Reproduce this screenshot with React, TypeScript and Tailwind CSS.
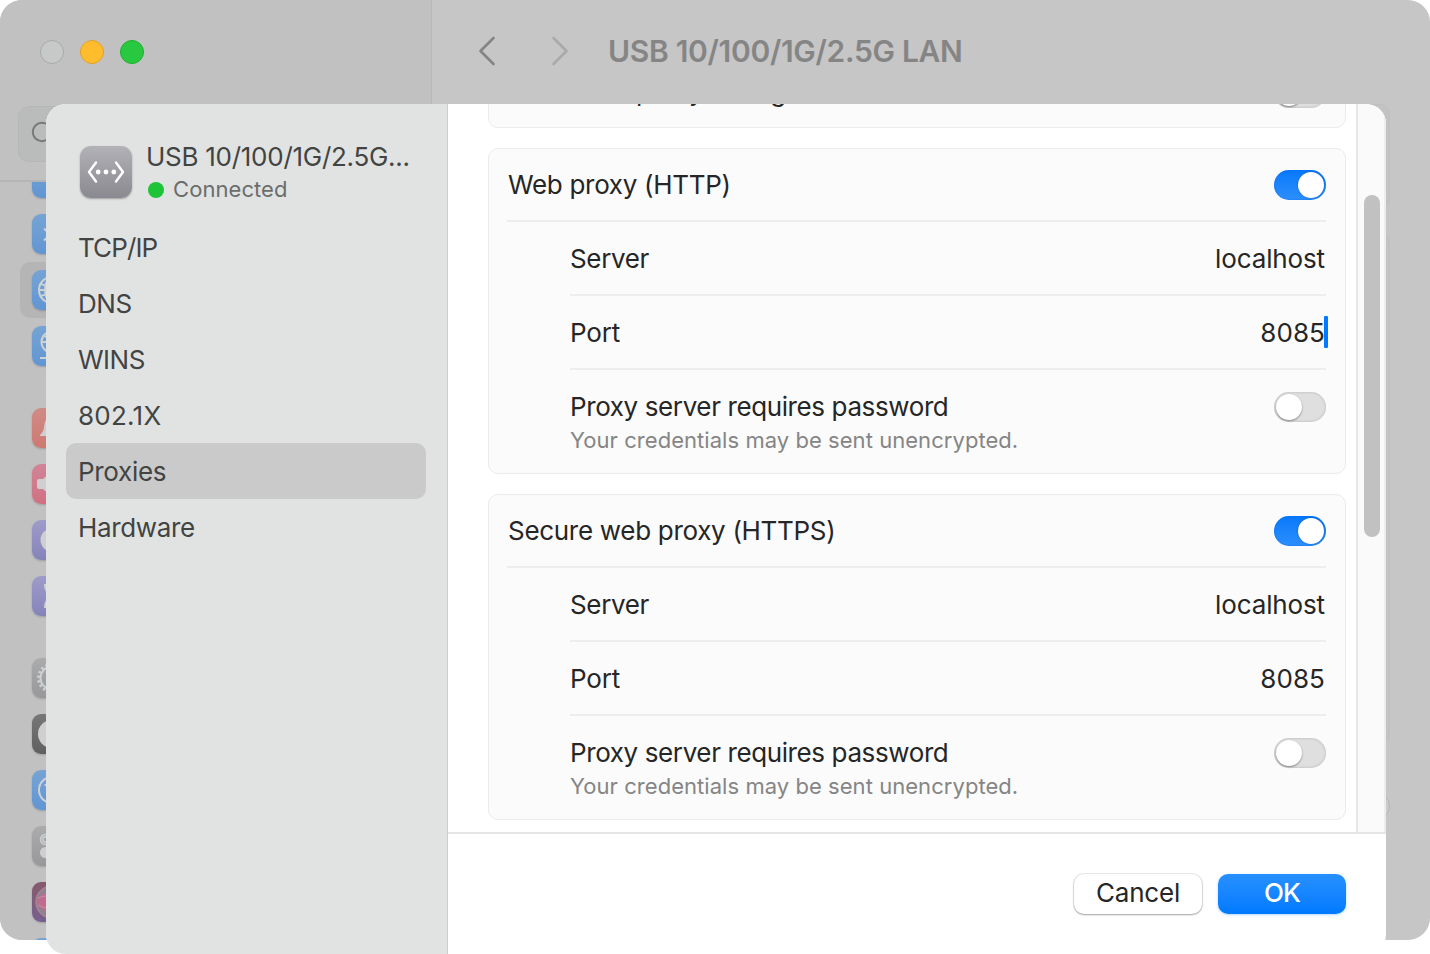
import React from "react";

type TileProps = { tone: string; children?: React.ReactNode };

function Tile({ tone, children }: TileProps) {
  return (
    <div className="flex h-14 shrink-0 items-center pl-8">
      <svg viewBox="0 0 40 40" className={`h-10 w-10 rounded-[9px] shadow-[0_1px_2px_rgba(0,0,0,0.18)] ${tone}`} fill="none" stroke="#cdd1d3" strokeWidth="2">
        {children}
      </svg>
    </div>
  );
}

const BLUE = "bg-linear-to-b from-[#76a3d3] to-[#6196d3]";
const PURPLE = "bg-linear-to-b from-[#9f9bc9] to-[#8683bb]";
const GRAY = "bg-linear-to-b from-[#acacad] to-[#98989a]";

function WindowSidebar() {
  return (
    <div className="flex w-[432px] shrink-0 flex-col border-r border-[#b8bab9] bg-[#c1c1c1]">
      <div className="flex h-[106px] shrink-0 items-center gap-4 pl-10 pb-0.5">
        <div className="h-6 w-6 rounded-full border border-[#a9abaa] bg-[#c6c9c8]" />
        <div className="h-6 w-6 rounded-full border border-[#e2a02b] bg-[#ffbd2e]" />
        <div className="h-6 w-6 rounded-full border border-[#1eae30] bg-[#28c940]" />
      </div>
      <div className="ml-[18px] mr-5 flex h-14 shrink-0 items-center rounded-[11px] border border-[#b5b7b6] bg-[#babcbb] pl-3">
        <svg viewBox="0 0 26 26" className="h-[26px] w-[26px]" fill="none" stroke="#777878" strokeWidth="2">
          <circle cx="11" cy="11" r="9.2" />
          <path d="M18 18l6 6" />
        </svg>
      </div>
      <div className="mt-[18px] flex min-h-0 flex-1 flex-col overflow-hidden border-t-2 border-[#b5b5b5]">
        <div className="-mt-8 flex flex-col">
          <Tile tone={BLUE} />
          <Tile tone={BLUE}>
            <path d="M12 14.500l6 6-6 6" />
          </Tile>
          <div className="relative">
            <div className="absolute inset-y-0 left-5 right-5 rounded-[10px] bg-[#b5b5b5]" />
            <div className="relative">
              <Tile tone={BLUE}>
                <circle cx="20" cy="20" r="13" />
                <ellipse cx="20" cy="20" rx="7" ry="13" />
                <path d="M8 13q5 5 24 0M7 20h26M8 27q5-5 24 0" />
              </Tile>
            </div>
          </div>
          <Tile tone={BLUE}>
            <circle cx="20" cy="16" r="10.500" />
            <ellipse cx="20" cy="16" rx="5" ry="10.500" />
            <path d="M10 16h20M8 32h24M12 10q8 4 16 0" />
          </Tile>
          <div className="mt-[26px] flex flex-col">
            <Tile tone="bg-linear-to-b from-[#d08b86] to-[#ce7971]">
              <path fill="#cfcfcf" stroke="none" d="M8 28c0-2 3-3 4-8 .6-8 3-11 8-11s7.400 3 8 11c1 5 4 6 4 8z" />
            </Tile>
            <Tile tone="bg-linear-to-b from-[#d18498] to-[#d07182]">
              <path fill="#cfcfcf" stroke="none" d="M7 15h4l8-7v24l-8-7H7q-2 0-2-2v-6q0-2 2-2z" />
            </Tile>
            <Tile tone={PURPLE}>
              <circle cx="20" cy="20" r="11.500" fill="#cfcfcf" stroke="none" />
            </Tile>
            <Tile tone={PURPLE}>
              <path fill="#cfcfcf" stroke="none" d="M12 8h16v3q-1 6-6 9 5 3 6 9v3H12v-2q1-7 6-10-5-3-6-10z" />
            </Tile>
          </div>
          <div className="mt-[26px] flex flex-col">
            <Tile tone={GRAY}>
              <circle cx="20" cy="20" r="11.500" />
              <circle cx="20" cy="20" r="13.500" strokeWidth="3" strokeDasharray="2.300 2.400" />
            </Tile>
            <Tile tone="bg-linear-to-b from-[#777777] to-[#606060]">
              <circle cx="20" cy="20" r="14" fill="#cfcfcf" stroke="none" />
            </Tile>
            <Tile tone={BLUE}>
              <circle cx="20" cy="20" r="13" />
              <path d="M12.500 15h5M15 15v10" />
            </Tile>
            <Tile tone={GRAY}>
              <rect x="8.500" y="8.500" width="23" height="10" rx="5" strokeWidth="1.500" />
              <circle cx="13.500" cy="13.500" r="2.700" strokeWidth="1.500" />
              <rect x="8" y="21" width="24" height="11" rx="5.500" fill="#cfcfcf" stroke="none" />
            </Tile>
            <Tile tone="bg-linear-to-b from-[#86596b] to-[#76608f]">
              <circle cx="20" cy="20" r="16" fill="#8d8193" stroke="#a98391" strokeWidth="1.500" />
              <circle cx="15" cy="20" r="9" fill="#c16c8f" stroke="none" />
              <path d="M6 16q8-4 18 0M6 23q8 5 18 0" stroke="#cb8ba4" strokeWidth="1" />
            </Tile>
            <Tile tone={BLUE} />
          </div>
        </div>
      </div>
    </div>
  );
}

function BackWindow() {
  return (
    <div className="flex h-[940px] w-full overflow-hidden rounded-[22px] bg-[#c6c6c6]">
      <WindowSidebar />
      <div className="flex flex-1 flex-col pr-10">
        <div className="flex h-[104px] items-center pb-0.5 pl-[46px]">
          <svg viewBox="0 0 18 30" className="h-[30px] w-[18px]" fill="none" stroke="#858585" strokeWidth="2.600" strokeLinecap="round" strokeLinejoin="round">
            <path d="M15.500 2L2.500 15l13 13" />
          </svg>
          <svg viewBox="0 0 18 30" className="ml-[55px] h-[30px] w-[18px]" fill="none" stroke="#aaaaaa" strokeWidth="2.600" strokeLinecap="round" strokeLinejoin="round">
            <path d="M2.500 2l13 13-13 13" />
          </svg>
          <h1 className="ml-[39px] whitespace-nowrap text-[30px] leading-9 font-semibold tracking-[-0.310px] text-[#858585]">USB 10/100/1G/2.5G LAN</h1>
        </div>
        <div className="ml-5 h-[105px] rounded-[10px] border border-[#bebebe] bg-[#c3c3c3]" />
        <div className="mt-6 ml-5 h-[512px] rounded-[10px] border border-[#bebebe] bg-[#c3c3c3]" />
        <div className="mt-[47px] h-7 w-7 self-end rounded-full border border-[#b5b5b5] bg-[#cbcbcb]" />
      </div>
    </div>
  );
}

function Toggle({ on }: { on: boolean }) {
  return on ? (
    <div className="flex h-[30px] w-[52px] shrink-0 items-center justify-end rounded-full bg-linear-to-b from-[#0578fb] to-[#2b8ffc] pr-[2px] shadow-[inset_0_0_1px_1px_rgba(0,100,230,0.25)]">
      <div className="h-[26px] w-[26px] rounded-full bg-white shadow-[0_0_2px_rgba(0,0,0,0.3)]" />
    </div>
  ) : (
    <div className="flex h-[30px] w-[52px] shrink-0 items-center rounded-full bg-[#dfdfdf] pl-[2px] shadow-[inset_0_0_3px_rgba(0,0,0,0.2)]">
      <div className="h-[26px] w-[26px] rounded-full bg-white shadow-[0_1px_2px_rgba(0,0,0,0.4)]" />
    </div>
  );
}

function ProxyCard({ title, caret }: { title: string; caret?: boolean }) {
  return (
    <section className="h-[326px] shrink-0 rounded-[10px] border border-[#ebebeb] bg-[#fbfbfb] pr-[19px] pl-[18px]">
      <div className="flex h-[73px] items-center justify-between border-b-2 border-[#ededed] pl-px">
        <span className="tracking-[-0.300px]">{title}</span>
        <Toggle on />
      </div>
      <div className="pl-[63px]">
        <div className="flex h-[74px] items-center justify-between border-b-2 border-[#ededed]">
          <span className="tracking-[-0.350px]">Server</span>
          <span className="pr-px tracking-[-0.130px]">localhost</span>
        </div>
        <div className="flex h-[74px] items-center justify-between border-b-2 border-[#ededed]">
          <span className="tracking-[-0.150px]">Port</span>
          <span className="relative pr-px tracking-[0.100px]">
            8085
            {caret && <span className="absolute top-[3px] -right-0.5 h-8 w-1 rounded-[1px] bg-[#007aff]" />}
          </span>
        </div>
        <div className="flex justify-between pt-[21px]">
          <div className="flex flex-col">
            <span className="leading-8 tracking-[-0.390px]">Proxy server requires password</span>
            <span className="pt-[3px] text-[22px] leading-[28px] tracking-[0.050px] text-[#858585]">Your credentials may be sent unencrypted.</span>
          </div>
          <div className="pt-px">
            <Toggle on={false} />
          </div>
        </div>
      </div>
    </section>
  );
}

const NAV = [
  { label: "TCP/IP", tracking: "tracking-[-0.900px]" },
  { label: "DNS", tracking: "tracking-[-0.400px]" },
  { label: "WINS", tracking: "tracking-[-0.500px]" },
  { label: "802.1X", tracking: "tracking-[0.250px]" },
  { label: "Proxies", tracking: "tracking-[-0.300px]", selected: true },
  { label: "Hardware", tracking: "tracking-[-0.350px]" },
];

function SheetSidebar() {
  return (
    <aside className="flex w-[401.500px] shrink-0 flex-col border-r border-[#cdcfce] bg-[#e1e3e2] pr-[21px] pl-5 text-[#424443]">
      <div className="flex h-[115px] pt-[42px] pl-[14px]">
        <div className="flex h-[52px] w-[52px] shrink-0 items-center justify-center rounded-[11px] bg-linear-to-b from-[#b3b2b7] to-[#8a898f] shadow-[0_1px_2px_rgba(0,0,0,0.3)]">
          <svg viewBox="0 0 40 24" className="h-6 w-10" fill="none" stroke="white" strokeWidth="2.400" strokeLinecap="round" strokeLinejoin="round">
            <path d="M10 2.500L3 12l7 9.500M30 2.500L37 12l-7 9.500" />
            <g fill="white" stroke="none">
              <circle cx="12.200" cy="12" r="2.400" />
              <circle cx="20" cy="12" r="2.400" />
              <circle cx="27.800" cy="12" r="2.400" />
            </g>
          </svg>
        </div>
        <div className="-mt-[5px] flex flex-col pl-[14px] whitespace-nowrap">
          <span className="leading-8 tracking-[-0.270px]">USB 10/100/1G/2.5G...</span>
          <div className="flex items-center gap-[9px] pl-[2px] text-[22px] leading-8 tracking-[0.070px] text-[#6b6d6c]">
            <span className="mt-px h-4 w-4 rounded-full bg-[#1dc437]" />
            Connected
          </div>
        </div>
      </div>
      <nav className="flex flex-col">
        {NAV.map((n) => (
          <div key={n.label} className={`flex h-14 items-center rounded-[10px] pl-3 ${n.tracking} ${n.selected ? "bg-[#cacaca]" : ""}`}>
            {n.label}
          </div>
        ))}
      </nav>
    </aside>
  );
}

function Sheet() {
  return (
    <div className="absolute top-[104px] left-[46px] flex h-[850px] w-[1340px] overflow-hidden rounded-[20px] bg-white text-[26px] text-[#262626]">
      <SheetSidebar />
      <div className="flex min-w-0 flex-1 flex-col">
        <div className="flex h-[728px] overflow-hidden">
          <div className="flex flex-1 flex-col gap-5 pr-[10px] pl-[40.500px]">
            <section className="-mt-[50px] flex h-[74px] shrink-0 items-center justify-between rounded-[10px] border border-[#ebebeb] bg-[#fbfbfb] pr-[19px] pl-[19px]">
              <span className="tracking-[-0.350px]">Automatic proxy configuration</span>
              <div className="pt-1">
                <Toggle on={false} />
              </div>
            </section>
            <ProxyCard title="Web proxy (HTTP)" caret />
            <ProxyCard title="Secure web proxy (HTTPS)" />
          </div>
          <div className="w-[30px] shrink-0 border-x-2 border-l-[#e6e6e6] border-r-[#ededed] bg-[#fafafa] pt-[91px] pl-[6px]">
            <div className="h-[342px] w-4 rounded-full bg-[#c1c1c1]" />
          </div>
        </div>
        <div className="flex flex-1 items-start justify-end gap-4 border-t-2 border-[#e5e5e5] pt-10 pr-10">
          <button className="h-10 w-32 rounded-[10px] bg-white pb-0.5 leading-[38px] tracking-[-0.200px] shadow-[0_0_0_1px_rgba(0,0,0,0.08),0_1px_2px_rgba(0,0,0,0.3)]">Cancel</button>
          <button className="h-10 w-32 rounded-[10px] bg-linear-to-b from-[#2690ff] to-[#007aff] pb-0.5 leading-[38px] font-medium tracking-[-0.800px] text-white shadow-[0_1px_3px_rgba(0,122,255,0.3)]">OK</button>
        </div>
      </div>
    </div>
  );
}

export default function App() {
  return (
    <div className="relative h-[954px] w-[1430px] overflow-hidden bg-white font-['Inter','Liberation_Sans',sans-serif]">
      <BackWindow />
      <Sheet />
    </div>
  );
}
